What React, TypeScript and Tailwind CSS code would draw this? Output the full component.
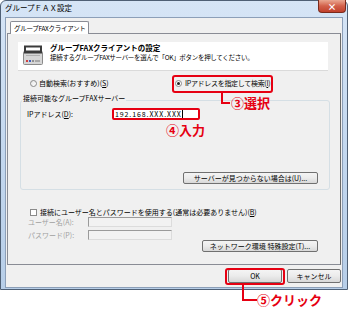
import React from 'react';

const Btn: React.FC<{ label: string; className?: string }> = ({ label, className = '' }) => (
  <div
    className={`flex items-center justify-center rounded-[2px] border border-[#707070] bg-linear-to-b from-[#f4f4f4] via-[#ebebeb] to-[#d8d8d8] text-[7px] text-black ${className}`}
  >
    {label}
  </div>
);

const FaxIcon = () => (
  <svg width="20" height="20" viewBox="0 0 20 20">
    <rect x="0.5" y="6.5" width="19" height="13" rx="1" fill="#d6d6d6" stroke="#8a8a8a" />
    <rect x="1" y="0.5" width="18" height="8" fill="#3b3b3b" />
    <rect x="3" y="2.5" width="14" height="3" fill="#ffffff" />
    <rect x="3" y="10" width="14" height="1" fill="#b0b0b0" />
    <rect x="3" y="15" width="2" height="2" fill="#d04040" />
    <rect x="6" y="15" width="2" height="2" fill="#4060c0" />
    <rect x="9" y="15" width="2" height="2" fill="#909090" />
    <rect x="12" y="15" width="5" height="2" fill="#a8a8a8" />
  </svg>
);

const App: React.FC = () => {
  return (
    <div className="relative w-[350px] h-[309px] overflow-hidden bg-white font-['Noto_Sans_CJK_JP',sans-serif] text-[7px] leading-none text-black">
      {/* Window */}
      <div className="flex h-[290px] w-[348px] flex-col rounded-t-[6px] border border-[#4f6075] bg-linear-to-b from-[#d6e5f6] via-[#c4d8ef] to-[#b7cee8] px-[4px] pb-[1px]">
        {/* Title bar */}
        <div className="flex h-[16px] items-start justify-between">
          <span className="mt-[3px] text-[7.5px]">グループＦＡＸ設定</span>
          <div className="-mr-[3px] -mt-px flex h-[13px] w-[28px] items-center justify-center rounded-b-[4px] border border-t-0 border-[#7a2a1c] bg-linear-to-b from-[#e9a792] via-[#d2604a] to-[#c0402c] text-[9px] font-bold text-white">
            ×
          </div>
        </div>

        {/* Client area */}
        <div className="flex flex-1 flex-col border border-[#8c9fb8] bg-[#f0f0f0]">
          {/* Tab strip */}
          <div className="flex h-[15px] pl-[4px] pt-[3px]">
            <div className="relative z-10 -mb-px flex h-[13px] items-center rounded-t-[2px] border border-b-0 border-[#898c95] bg-white px-[3px] text-[6.5px] tracking-[-0.3px]">
              グループFAXクライアント
            </div>
          </div>

          {/* Tab panel */}
          <div className="mx-[1px] flex h-[232px] flex-col border border-[#898c95] border-r-[#6a6a6a] bg-[#f0f0f0]">
            {/* Header */}
            <div className="ml-[10px] mt-[8px] flex h-[29px] w-[310px] items-start border-b border-[#dadada] bg-white">
              <div className="ml-[5px] mt-[3px]">
                <FaxIcon />
              </div>
              <div className="ml-[7px] flex flex-col">
                <span className="mt-[2px] text-[7.5px] font-bold">グループFAXクライアントの設定</span>
                <span className="mt-[2px] text-[6.5px] tracking-[-0.3px]">接続するグループFAXサーバーを選んで「OK」ボタンを押してください。</span>
              </div>
            </div>

            {/* Radios */}
            <div className="mt-[8px] flex h-[8px] items-center pl-[22px]">
              <div className="flex w-[145px] items-center">
                <span className="h-[7px] w-[7px] rounded-full border border-[#8a8a8a] bg-linear-to-br from-[#e6e6e6] to-white" />
                <span className="ml-[2px]">自動検索(おすすめ)(<span className="underline">S</span>)</span>
              </div>
              <div className="flex items-center">
                <span className="flex h-[7px] w-[7px] items-center justify-center rounded-full border border-[#8a8a8a] bg-white">
                  <span className="h-[3px] w-[3px] rounded-full bg-[#202020]" />
                </span>
                <span className="ml-[3px] tracking-[-0.3px]">IPアドレスを指定して検索(<span className="underline">I</span>)</span>
              </div>
            </div>

            {/* Group box */}
            <div className="relative ml-[12px] mt-[13px] flex h-[90px] w-[310px] flex-col rounded-[3px] border border-[#d5dfe5]">
              <span className="absolute left-[1px] top-[-6px] bg-[#f0f0f0] px-[1px]">接続可能なグループFAXサーバー</span>
              <div className="mt-[7px] flex items-center pl-[6px]">
                <span className="w-[85px]">IPアドレス(<span className="underline">D</span>):</span>
                <div className="flex h-[12px] w-[88px] items-center rounded-[2px] border-2 border-[#e60012] bg-white pl-[1px]">
                  <span className="text-[7px] tracking-[0.9px]">192.168.XXX.XXX</span>
                  <span className="h-[8px] w-px bg-black" />
                </div>
              </div>
              <Btn label="サーバーが見つからない場合は(U)..." className="mb-[5px] mr-[11px] mt-auto h-[12px] w-[135px] self-end" />
            </div>

            {/* Auth */}
            <div className="mt-[18px] flex h-[8px] items-center pl-[22px]">
              <span className="h-[7px] w-[7px] border border-[#8a8a8a] bg-white" />
              <span className="ml-[3px]">接続にユーザー名とパスワードを使用する(通常は必要ありません)(<span className="underline">B</span>)</span>
            </div>
            <div className="mt-px flex items-center pl-[20px] text-[#a0a0a0]">
              <span className="w-[60px]">ユーザー名(A):</span>
              <span className="h-[10px] w-[84px] border border-[#9a9a9a] border-b-[#dcdcdc] border-r-[#dcdcdc] bg-[#f2f2f2]" />
            </div>
            <div className="mt-[3px] flex items-center pl-[20px] text-[#a0a0a0]">
              <span className="w-[60px]">パスワード(P):</span>
              <span className="h-[10px] w-[84px] border border-[#9a9a9a] border-b-[#dcdcdc] border-r-[#dcdcdc] bg-[#f2f2f2]" />
            </div>
            <Btn label="ネットワーク環境 特殊設定(T)..." className="mr-[22px] h-[12px] w-[116px] self-end" />
          </div>

          {/* Dialog buttons */}
          <div className="mt-[4px] flex h-[14px] justify-end gap-[5px] pr-[1px]">
            <Btn label="OK" className="w-[54px]" />
            <Btn label="キャンセル" className="w-[54px]" />
          </div>
        </div>
      </div>

      {/* Annotations */}
      <div className="absolute left-[172px] top-[75px] h-[18px] w-[101px] rounded-[3px] border-2 border-[#e60012]" />
      <div className="absolute left-[221px] top-[93px] h-[11px] w-[9px] border-b-2 border-l-2 border-[#e60012]" />
      <span className="absolute left-[231px] top-[96px] text-[13px] font-bold text-[#e60012]">③選択</span>
      <span className="absolute left-[166px] top-[123px] text-[13px] font-bold text-[#e60012]">④入力</span>
      <div className="absolute left-[225px] top-[268px] h-[17px] w-[60px] rounded-[3px] border-2 border-[#e60012]" />
      <div className="absolute left-[242px] top-[285px] h-[16px] w-[15px] border-b-2 border-l-2 border-[#e60012]" />
      <span className="absolute left-[257px] top-[293px] text-[13px] font-bold text-[#e60012]">⑤クリック</span>
    </div>
  );
};

export default App;
